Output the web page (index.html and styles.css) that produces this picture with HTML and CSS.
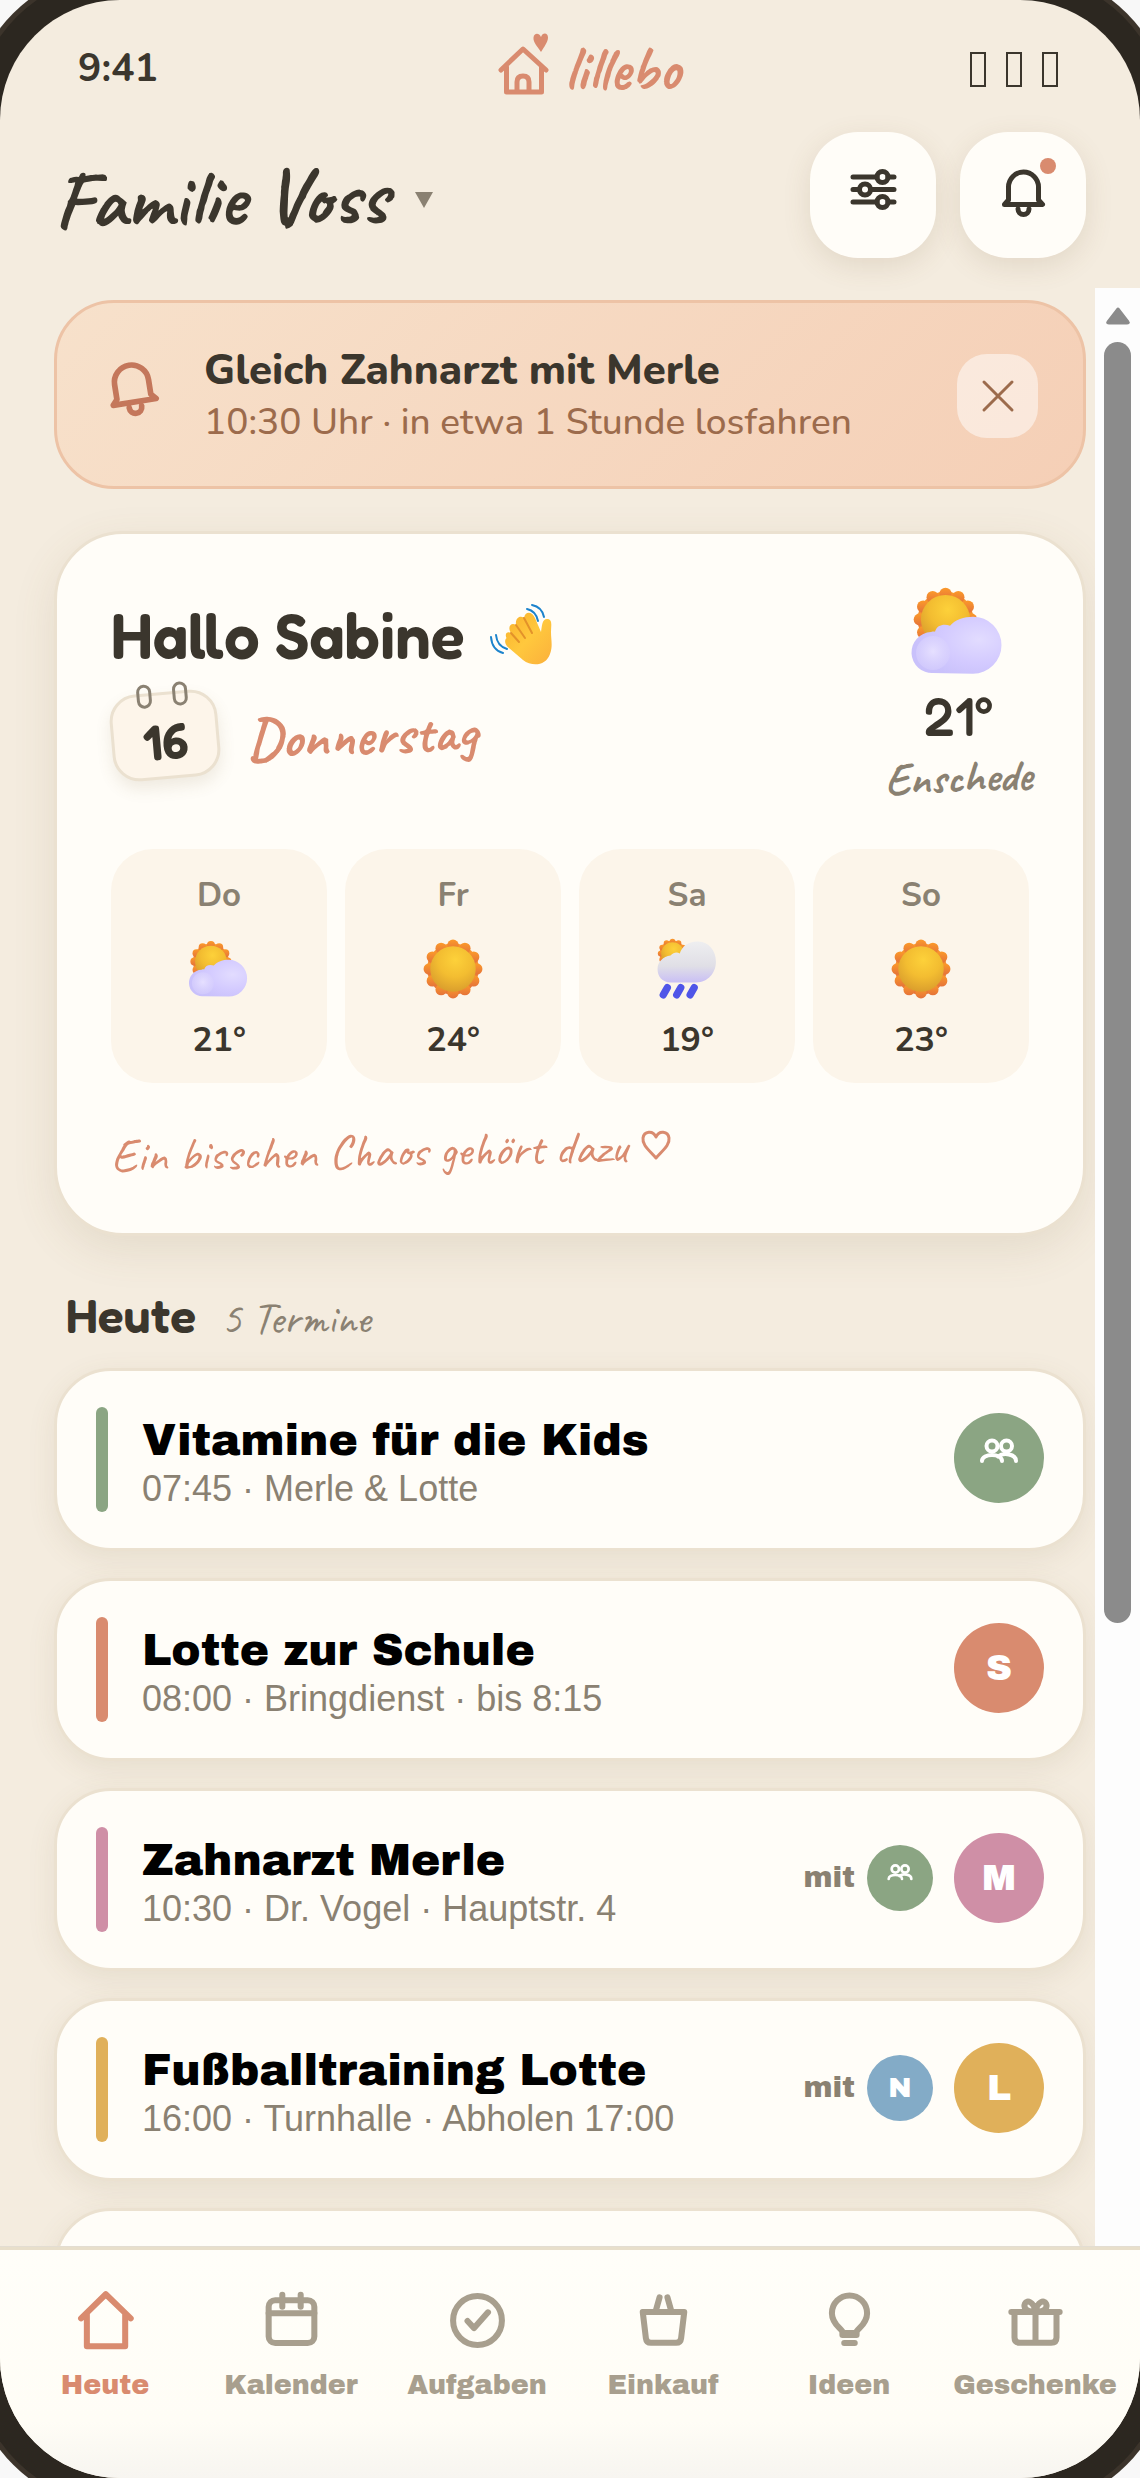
FILE: index.html
```
<!DOCTYPE html>
<html lang="de">
<head>
<meta charset="utf-8">
<meta name="viewport" content="width=device-width, initial-scale=1">
<title>lillebo – Heute</title>
<link rel="stylesheet" href="styles.css">
</head>
<body>
<svg class="defs" aria-hidden="true">
  <defs>
    <radialGradient id="sunFill" cx=".55" cy=".3" r=".75"><stop offset="0" stop-color="#fdd13a"/><stop offset=".5" stop-color="#f3bd31"/><stop offset="1" stop-color="#d79a2c"/></radialGradient>
    <linearGradient id="rayFill" x1="0" y1="0" x2="0" y2="1"><stop offset="0" stop-color="#fb9a2a"/><stop offset="1" stop-color="#e5733a"/></linearGradient>
    <radialGradient id="cloudFill" cx=".75" cy=".4" r=".7"><stop offset="0" stop-color="#e2dcff"/><stop offset=".6" stop-color="#d3caff"/><stop offset="1" stop-color="#c9c1fb"/></radialGradient>
    <radialGradient id="puffFill" cx=".5" cy=".45" r=".55"><stop offset="0" stop-color="#e6e0ff"/><stop offset="1" stop-color="#d6cefd" stop-opacity=".6"/></radialGradient>
    <linearGradient id="rainCloudFill" x1="0" y1="0" x2="0" y2="1"><stop offset="0" stop-color="#eeeef0"/><stop offset=".6" stop-color="#e0dfe6"/><stop offset="1" stop-color="#c9bff5"/></linearGradient>
    <linearGradient id="handFill" x1="0" y1="0" x2="1" y2="1"><stop offset="0" stop-color="#f9b02c"/><stop offset=".5" stop-color="#ffc83d"/><stop offset="1" stop-color="#fbb03c"/></linearGradient>
  </defs>
  <symbol id="sun" viewBox="0 0 60 60">
    <g fill="url(#rayFill)">
      <circle cx="30" cy="30" r="25"/>
      <circle cx="30" cy="7" r="5.500"/><circle cx="41.500" cy="10" r="5.500"/><circle cx="50" cy="18.500" r="5.500"/><circle cx="53" cy="30" r="5.500"/><circle cx="50" cy="41.500" r="5.500"/><circle cx="41.500" cy="50" r="5.500"/><circle cx="30" cy="53" r="5.500"/><circle cx="18.500" cy="50" r="5.500"/><circle cx="10" cy="41.500" r="5.500"/><circle cx="7" cy="30" r="5.500"/><circle cx="10" cy="18.500" r="5.500"/><circle cx="18.500" cy="10" r="5.500"/>
    </g>
    <circle cx="30" cy="30" r="22" fill="url(#sunFill)"/>
  </symbol>
  <symbol id="partly" viewBox="0 0 96 92">
    <use href="#sun" x="2" y="1" width="67" height="67"/>
    <path d="M23 88a20 20 0 0 1-2-41c2-.5 3-.5 4-.3 2-7 9-8 15-6 5-6 14-9 23-9a28.500 28.500 0 0 1 0 57z" fill="url(#cloudFill)"/>
    <circle cx="23" cy="68" r="17" fill="url(#puffFill)"/>
  </symbol>
  <symbol id="rain" viewBox="0 0 60 60">
    <use href="#sun" x="1" y="0" width="30" height="30"/>
    <path d="M14 43C6 43 1.500 37 1.500 30S7 18 14 17C17 14 20 13 23 15 25 8 32 3 41 3.500 51 4 58 12 58 23S50 43 39 43z" fill="url(#rainCloudFill)"/>
    <g stroke="#4f55e8" stroke-width="7" stroke-linecap="round"><path d="M11 48 7 55M24 48l-4 7M37 48l-4 7"/></g>
  </symbol>
  <symbol id="bell" viewBox="0 0 63 63">
    <path d="M16.500 42V29a15 15 0 0 1 30 0v13l4 4.500h-38zM26 51a5.500 5.500 0 0 0 11 0"/>
  </symbol>
  <symbol id="people" viewBox="0 0 42 42">
    <g fill="none" stroke="#fff" stroke-width="4" stroke-linecap="round"><circle cx="14" cy="12" r="5.500"/><circle cx="28.500" cy="12" r="5.500"/><path d="M4 27c0-8 20-8 20 0M20 22.500c5-4 18-3 18 4.500"/></g>
  </symbol>
</svg>

<div class="phone">
  <div class="status">
    <span class="time">9:41</span>
    <div class="brand">
      <svg width="56" height="70" viewBox="0 0 56 70" aria-hidden="true">
        <path d="M5 39 27 18 50 39M10.500 36v25h35V36M21 60V51q0-6 6-6t6 6v9" fill="none" stroke="#d98b6f" stroke-width="5" stroke-linecap="round" stroke-linejoin="round"/>
        <path d="M45 21C41 15 37 11 37.500 6.500 38 2 43 1.500 45 6 46.500 1 52 1.500 52 6.500 52 11 48 16 45 21z" fill="#d98b6f"/>
      </svg>
      <span class="brand-name">lillebo</span>
    </div>
    <div class="signals" aria-hidden="true"><i></i><i></i><i></i></div>
  </div>

  <header class="top">
    <button class="family" type="button"><span class="family-name">Familie Voss</span>
      <svg width="18" height="16" viewBox="0 0 18 16" aria-hidden="true"><path d="M0 0h18L9 16z" fill="#8a8172"/></svg>
    </button>
    <div class="tools">
      <button class="tool" type="button" aria-label="Filter">
        <svg class="line" width="63" height="63" viewBox="0 0 63 63"><path d="M11 19h24M46 19h6M11 31.500h6M29 31.500h23M11 44h24M46 44h6"/><circle cx="40.500" cy="19" r="5.500"/><circle cx="23" cy="31.500" r="5.500"/><circle cx="40.500" cy="44" r="5.500"/></svg>
      </button>
      <button class="tool" type="button" aria-label="Mitteilungen">
        <svg class="line" width="63" height="63"><use href="#bell"/></svg><span class="dot"></span>
      </button>
    </div>
  </header>

  <div class="viewport">
    <main class="content">
      <section class="reminder">
        <svg class="line reminder-bell" width="72" height="72" aria-hidden="true"><use href="#bell"/></svg>
        <div class="reminder-text"><strong>Gleich Zahnarzt mit Merle</strong><span>10:30 Uhr · in etwa 1 Stunde losfahren</span></div>
        <button class="close" type="button" aria-label="Schließen"><svg width="34" height="34" viewBox="0 0 34 34"><path d="M3 3l28 28M31 3 3 31" stroke="#9c6b4c" stroke-width="3" stroke-linecap="round"/></svg></button>
      </section>

      <section class="hero">
        <div class="hero-top">
          <div class="greet">
            <h1>Hallo Sabine
              <svg width="66" height="66" viewBox="0 0 66 66" aria-hidden="true">
                <g fill="none" stroke="#1c83cc" stroke-width="2" stroke-linecap="round"><path d="M43 3q10 2 12 12M38 7q9 2 11 12M7 33q1 11 11 14M2 35q1 13 12 16"/></g>
                <path d="M18 37C15 32 18 29 22 31 18 25 22 20 27 23 26 16 31 13 35 16 36 9 43 9 46 16L52 30C53 24 53 17 58 17 64 17 62 24 62 30 62 38 64 44 61 52 57 64 43 65 34 58L20 46C15 42 15 37 19 35z" fill="url(#handFill)"/>
                <path d="m22 31 8 9M27 23l9 13M35 16l8 15" stroke="#e3922a" stroke-width="2" stroke-linecap="round"/>
              </svg>
            </h1>
            <div class="date"><span class="leaf"><i></i><i></i>16</span><span class="weekday">Donnerstag</span></div>
          </div>
          <div class="now">
            <svg width="96" height="92" aria-hidden="true"><use href="#partly"/></svg>
            <span class="deg">21°</span>
            <span class="city">Enschede</span>
          </div>
        </div>
        <ul class="forecast">
          <li><span>Do</span><svg width="62" height="62" aria-hidden="true"><use href="#partly"/></svg><b>21°</b></li>
          <li><span>Fr</span><svg width="62" height="62" aria-hidden="true"><use href="#sun"/></svg><b>24°</b></li>
          <li><span>Sa</span><svg width="62" height="62" aria-hidden="true"><use href="#rain"/></svg><b>19°</b></li>
          <li><span>So</span><svg width="62" height="62" aria-hidden="true"><use href="#sun"/></svg><b>23°</b></li>
        </ul>
        <p class="motto"><span>Ein bisschen Chaos gehört dazu</span>
          <svg width="32" height="32" viewBox="0 0 32 32" aria-hidden="true"><path d="M16 29C9 21 2 16 3 9 4 2 13 1 16 8 19 1 28 2 29 9 30 16 23 21 16 29z" fill="none" stroke="#d98b6f" stroke-width="3" stroke-linejoin="round"/></svg>
        </p>
      </section>

      <div class="section-head"><h2>Heute</h2><span>5 Termine</span></div>

      <ul class="events">
        <li class="event green"><i class="bar"></i><div class="what"><strong>Vitamine für die Kids</strong><span>07:45 · Merle &amp; Lotte</span></div><span class="avatar bg-green"><svg width="42" height="42" aria-hidden="true"><use href="#people"/></svg></span></li>
        <li class="event coral"><i class="bar"></i><div class="what"><strong>Lotte zur Schule</strong><span>08:00 · Bringdienst · bis 8:15</span></div><span class="avatar bg-coral">S</span></li>
        <li class="event pink"><i class="bar"></i><div class="what"><strong>Zahnarzt Merle</strong><span>10:30 · Dr. Vogel · Hauptstr. 4</span></div><span class="with">mit <span class="avatar small bg-green"><svg width="28" height="28" aria-hidden="true"><use href="#people"/></svg></span></span><span class="avatar bg-pink">M</span></li>
        <li class="event gold"><i class="bar"></i><div class="what"><strong>Fußballtraining Lotte</strong><span>16:00 · Turnhalle · Abholen 17:00</span></div><span class="with">mit <span class="avatar small bg-blue">N</span></span><span class="avatar bg-gold">L</span></li>
        <li class="event"></li>
      </ul>
    </main>
    <div class="scrollbar" aria-hidden="true"><svg width="26" height="20" viewBox="0 0 26 20"><path d="M13 3 3 16q-1 1 1 1h18q2 0 1-1z" fill="#8b8b8b" stroke="#8b8b8b" stroke-width="3" stroke-linejoin="round"/></svg><div class="thumb"></div></div>
  </div>

  <nav class="tabs">
    <a class="tab active" href="#heute"><svg width="63" height="63" viewBox="0 0 24 24"><path d="M2.700 11.200 12.100 2l9.500 9.200M4.900 9.500v12.300h14.600V9.500"/></svg>Heute</a>
    <a class="tab" href="#kalender"><svg width="63" height="63" viewBox="0 0 24 24"><rect x="3.300" y="4.300" width="17.400" height="16.300" rx="2.500"/><path d="M3.300 9.200h17.400M8.500 2.200v4.600M15.500 2.200v4.600"/></svg>Kalender</a>
    <a class="tab" href="#aufgaben"><svg width="63" height="63" viewBox="0 0 24 24"><circle cx="12" cy="12" r="9.300"/><path d="m8.200 12.200 2.500 2.700 5.300-6"/></svg>Aufgaben</a>
    <a class="tab" href="#einkauf"><svg width="63" height="63" viewBox="0 0 24 24"><path d="M4.100 8.800h15.800l-1.200 10q-.2 1.700-1.900 1.700H7.200q-1.700 0-1.900-1.700zM9 8.500l1.500-5.300M15 8.500l-1.500-5.300"/></svg>Einkauf</a>
    <a class="tab" href="#ideen"><svg width="63" height="63" viewBox="0 0 24 24"><path d="M9.300 17.500v-1.300c-.8-1.500-4-3-4-7a6.700 6.700 0 0 1 13.400 0c0 4-3.200 5.500-4 7v1.300zM9.300 16.800h5.400M10 20.600h4"/></svg>Ideen</a>
    <a class="tab" href="#geschenke"><svg width="63" height="63" viewBox="0 0 24 24"><path d="M2.800 8.800h18.400M4 9v9.500q0 2 2 2h12q2 0 2-2V9M12 8.800v11.700M12 8.500C8.500 9 7.300 7 8 5.500S11.300 4.800 12 8.500C12.700 4.800 15.300 4 16 5.500S15.500 9 12 8.500"/></svg>Geschenke</a>
  </nav>
</div>
</body>
</html>
```
FILE: styles.css
```
:root {
  --ink: #3b362d;
  --muted: #8a8172;
  --coral: #d98b6f;
  --green: #8ba583;
  --pink: #cf8fa6;
  --gold: #e0b05a;
  --blue: #83abc7;
  --paper: #fffdf8;
  --line: #ebe1d0;
  --hand: Caveat, "Comic Sans MS", cursive;
  --round: Fredoka, Nunito, "Open Sans", sans-serif;
  --text: Nunito, "Open Sans", sans-serif;
  --plain: "Liberation Sans", Arial, sans-serif;
  --black: "Archivo Black", Inter, sans-serif;
}
* { box-sizing: border-box; }
html, body { height: 100%; }
body { margin: 0; background: #f8f8f8; color: var(--ink); font-family: var(--text); overflow: hidden; }
button { border: 0; padding: 0; background: none; color: inherit; font: inherit; }
ul { list-style: none; margin: 0; padding: 0; }
h1, h2, p { margin: 0; }
svg { display: block; flex: none; }
.defs { position: absolute; width: 0; height: 0; }

.phone {
  display: flex; flex-direction: column; height: 100vh; overflow: hidden;
  border-radius: 120px; background: #f4ecdf;
  box-shadow: 0 0 0 26px #2c2720, 0 0 0 31px #3c342b;
}

.status { display: grid; grid-template-columns: 1fr auto 1fr; align-items: center; height: 132px; padding: 6px 78px 0; }
.time { font-size: 39px; font-weight: 700; line-height: 50px; }
.brand { display: flex; align-items: center; gap: 12px; padding-left: 36px; color: var(--coral); }
.brand svg { margin-bottom: 6px; }
.brand-name { font: 700 62px/72px var(--hand); }
.signals { display: flex; justify-content: flex-end; gap: 20px; padding-right: 4px; }
.signals i { width: 16px; height: 35px; border: 2px solid var(--ink); }

.top { display: flex; justify-content: space-between; align-items: center; padding: 0 54px 30px 54px; }
.family { display: flex; align-items: center; gap: 27px; padding-top: 6px; }
.family-name { font: 700 81px/100px var(--hand); transform: rotate(-1deg); }
.family svg { margin-top: 4px; }
.tools { display: flex; gap: 24px; }
.tool {
  position: relative; display: grid; place-items: center; width: 126px; height: 126px; padding-bottom: 12px;
  border-radius: 48px; background: var(--paper); box-shadow: 0 8px 28px rgba(120, 95, 60, .14);
}
.line { fill: none; stroke: currentColor; stroke-width: 5; stroke-linecap: round; stroke-linejoin: round; }
.dot { position: absolute; top: 26px; right: 30px; width: 16px; height: 16px; border-radius: 50%; background: var(--coral); }

.viewport { flex: 1; min-height: 0; display: flex; overflow: hidden; }
.content { flex: 1; min-width: 0; overflow: hidden; padding: 12px 9px 0 54px; }
.scrollbar { display: flex; flex-direction: column; align-items: center; gap: 16px; width: 45px; padding-top: 18px; background: #fdfdfd; }
.thumb { width: 27px; height: 66%; border-radius: 14px; background: #8b8b8b; }

.reminder {
  display: flex; align-items: center; gap: 36px; padding: 41px 45px 39px 39px; border: 3px solid #edc3a6; border-radius: 60px;
  background: linear-gradient(135deg, #f7e1cb, #f5cfb6);
}
.reminder-bell { margin-bottom: 22px; color: #c4775b; transform: rotate(-9deg); }
.reminder-text { flex: 1; display: flex; flex-direction: column; }
.reminder-text strong { font-size: 42px; font-weight: 800; line-height: 54px; }
.reminder-text span { font-size: 37px; font-weight: 500; line-height: 49px; color: #9c6b4c; }
.close { display: grid; place-items: center; width: 81px; height: 84px; border-radius: 30px; background: rgba(255, 255, 255, .5); }

.hero {
  margin-top: 42px; padding: 51px 54px 52px; border: 3px solid var(--line); border-radius: 69px;
  background: var(--paper); box-shadow: 0 14px 44px rgba(120, 95, 60, .12);
}
.hero-top { display: flex; justify-content: space-between; }
.greet { display: flex; flex-direction: column; gap: 16px; padding-top: 12px; }
h1 { display: flex; align-items: center; gap: 24px; font: 600 63px/76px var(--round); }
.date { display: flex; align-items: center; gap: 28px; height: 92px; }
.leaf {
  position: relative; display: grid; place-items: center; width: 108px; height: 87px; padding-top: 10px;
  border: 3px solid var(--line); border-radius: 27px; background: #fdf5ea; font: 600 50px/60px var(--round);
  transform: rotate(-5deg); box-shadow: 0 8px 16px rgba(120, 95, 60, .12);
}
.leaf i { position: absolute; top: -12px; left: 26px; width: 15px; height: 24px; border: 3px solid var(--muted); border-radius: 8px; }
.leaf i + i { left: 62px; }
.weekday { font: 700 57px/72px var(--hand); color: var(--coral); transform: rotate(-2deg); }
.now { display: flex; flex-direction: column; align-items: center; margin-right: -3px; }
.deg { margin-top: 9px; font: 500 52px/60px var(--round); }
.city { margin-top: 4px; font: 700 45px/55px var(--hand); color: var(--muted); transform: rotate(-2deg); }

.forecast { display: grid; grid-template-columns: repeat(4, 1fr); gap: 18px; margin-top: 44px; }
.forecast li { display: flex; flex-direction: column; align-items: center; gap: 20px; padding: 25px 0 23px; border-radius: 42px; background: #fcf5ea; }
.forecast span { font-size: 33px; font-weight: 700; line-height: 44px; color: var(--muted); }
.forecast b { font-size: 34px; font-weight: 700; line-height: 40px; }
.motto { display: flex; align-items: center; gap: 12px; margin-top: 38px; font: 500 48px/60px var(--hand); color: var(--coral); }
.motto span { transform: rotate(-1deg); }
.motto svg { margin-bottom: 12px; }

.section-head { display: flex; align-items: baseline; gap: 25px; padding: 49px 12px 19px; }
h2 { font: 600 48px/60px var(--round); }
.section-head span { font: 400 45px/60px var(--hand); color: var(--muted); }

.events { display: flex; flex-direction: column; gap: 27px; }
.event {
  display: flex; align-items: center; min-height: 183px; padding: 36px 39px; border: 3px solid var(--line); border-radius: 57px;
  background: var(--paper); box-shadow: 0 8px 28px rgba(120, 95, 60, .1);
}
.bar { align-self: stretch; width: 12px; border-radius: 6px; background: var(--tone); }
.green { --tone: var(--green); } .coral { --tone: var(--coral); } .pink { --tone: var(--pink); } .gold { --tone: var(--gold); }
.what { flex: 1; display: flex; flex-direction: column; padding: 7px 0 0 34px; font-family: var(--plain); }
.what strong { font: 400 44px/52px var(--black); color: #000; }
.what span { font-size: 36px; line-height: 46px; color: var(--muted); }
.avatar { display: grid; place-items: center; width: 90px; height: 90px; border-radius: 50%; color: #fff; font: 400 36px/40px var(--black); }
.event > .avatar, .with { margin-bottom: 4px; }
.avatar svg { margin-bottom: 6px; }
.avatar.small { width: 66px; height: 66px; font-size: 28px; }
.with { display: flex; align-items: center; gap: 12px; margin-right: 21px; font: 400 29px/36px var(--black); color: var(--muted); }
.bg-green { background: var(--green); } .bg-coral { background: var(--coral); } .bg-pink { background: var(--pink); }
.bg-gold { background: var(--gold); } .bg-blue { background: var(--blue); }

.tabs {
  position: relative; display: grid; grid-template-columns: repeat(6, 1fr); padding: 39px 12px 75px;
  border-top: 3px solid #e8dfcb; background: linear-gradient(#fffef9, #fffdf6 75%, #f7f5f0);
  box-shadow: 0 -1px 0 #e3ddd2;
}
.tab { display: flex; flex-direction: column; align-items: center; gap: 15px; color: #a89f8e; text-decoration: none; white-space: nowrap; font: 400 27px/36px var(--black); }
.tab svg { fill: none; stroke: currentColor; stroke-width: 2.3; stroke-linecap: round; stroke-linejoin: round; }
.active { color: var(--coral); }
```
